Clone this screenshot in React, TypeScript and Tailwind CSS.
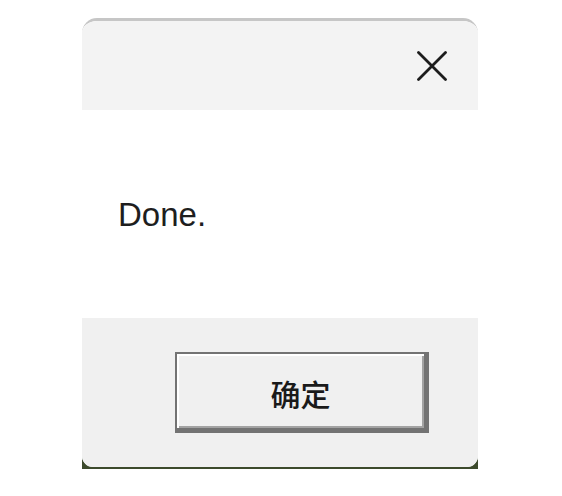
import React from 'react'

export default function App() {
  return (
    <div className="w-[562px] h-[496px] bg-white pt-[18px] pl-[82px]" style={{ fontFamily: '"Liberation Sans", "Noto Sans CJK SC", sans-serif' }}>
      <div className="w-[396px] h-[451px] pb-[2px] bg-[linear-gradient(to_bottom,#ffffff_calc(100%-24px),#3c4a2c_calc(100%-24px))]">
        <div className="h-full flex flex-col rounded-t-[15px] rounded-b-[11px] overflow-hidden border-t-[3px] border-[#c6c6c6] bg-white">
          <div className="h-[89px] flex items-center justify-end pr-[31px] bg-[#f3f3f3]">
            <svg width="30" height="30" viewBox="0 0 30 30" className="text-[#1c1c1c]">
              <path d="M1.5 1.5 L28.5 28.5 M28.5 1.5 L1.5 28.5" stroke="currentColor" strokeWidth="2.8" strokeLinecap="round" />
            </svg>
          </div>
          <div className="h-[208px] flex items-center pl-[36px] bg-white">
            <span className="text-[33px] leading-none text-[#1e1e1e]">Done.</span>
          </div>
          <div className="flex-1 bg-[#f0f0f0] pt-[34px] pl-[93px]">
            <button className="w-[254px] h-[81px] flex items-center justify-center pt-[3px] bg-[#f0f0f0] border-t-2 border-l-2 border-r-[5px] border-b-[5px] border-[#737373] shadow-[inset_2px_2px_0_#ffffff,inset_-2px_-2px_0_#a3a3a3]">
              <span className="text-[30px] leading-none font-medium text-[#1a1a1a]" style={{ fontFamily: '"Noto Sans CJK SC", sans-serif' }}>确定</span>
            </button>
          </div>
        </div>
      </div>
    </div>
  )
}
